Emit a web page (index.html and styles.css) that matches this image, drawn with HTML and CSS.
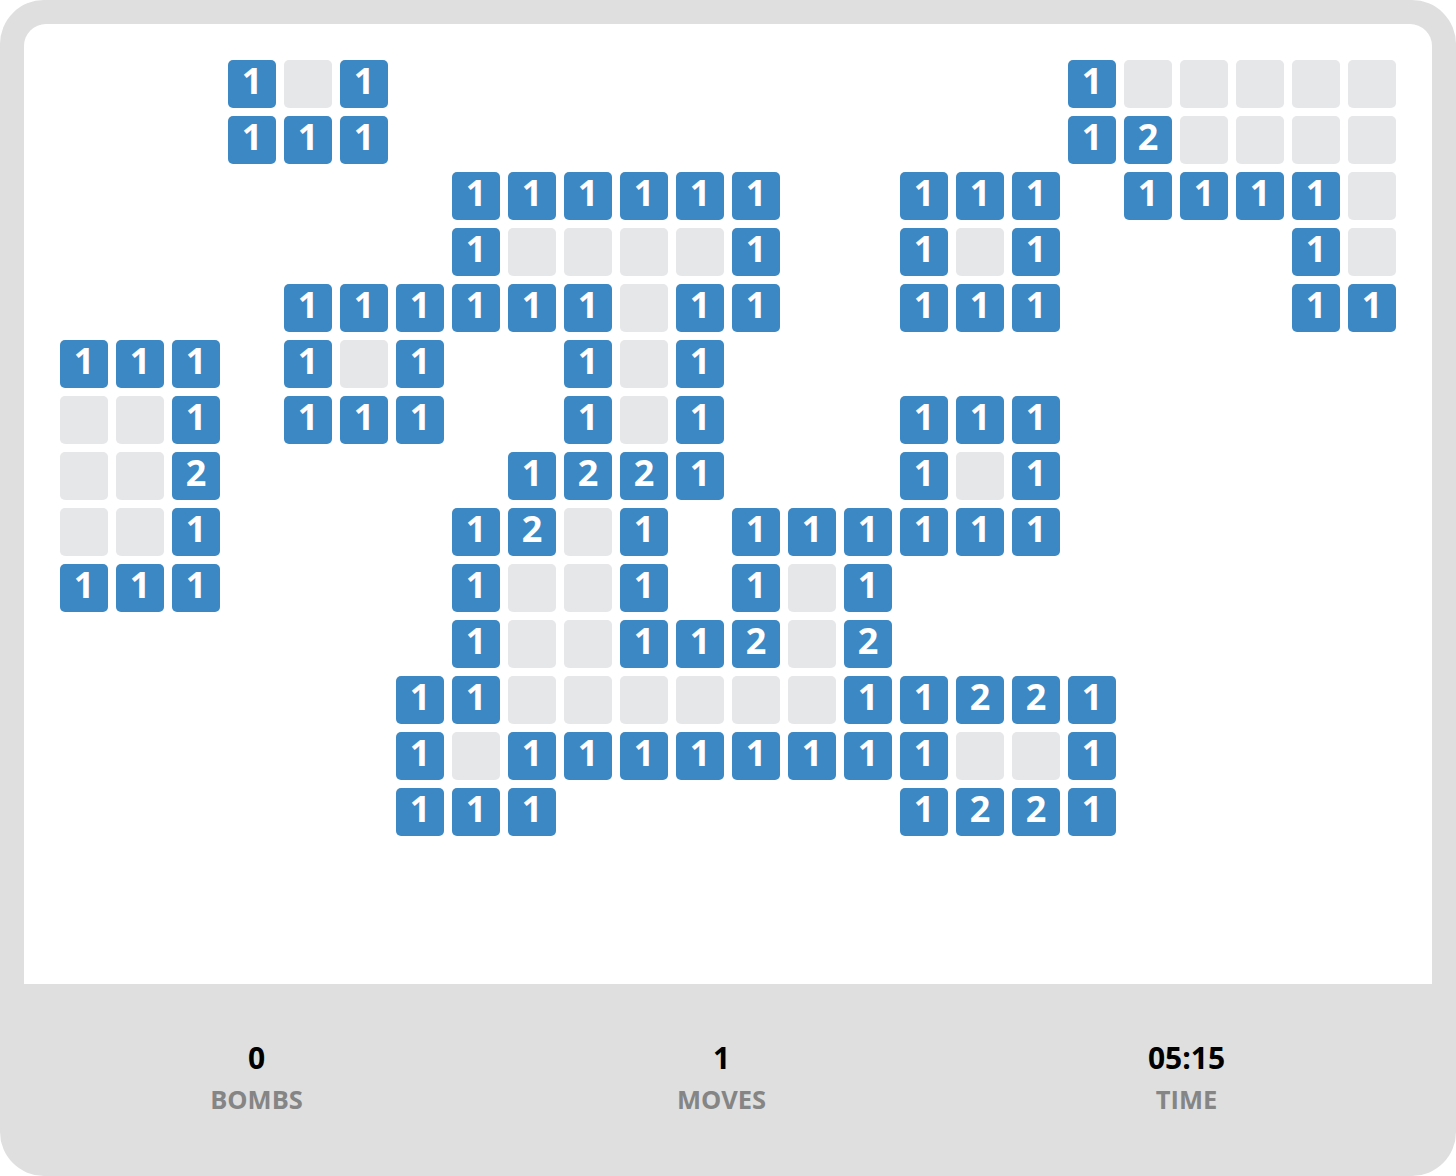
FILE: index.html
```html
<html>
<head><title>Minesweeper</title>
<link rel="stylesheet" href="styles.css">
</head>
<body>
<div class="frame">
	<div class="board" id="board"></div>
	<div class="stats">
		<div class="stat"><div class="value">0</div><div class="label">BOMBS</div></div>
		<div class="stat"><div class="value">1</div><div class="label">MOVES</div></div>
		<div class="stat"><div class="value">05:15</div><div class="label">TIME</div></div>
	</div>
</div>
<script type="text/javascript">
// '.' hidden, '0' open and empty, digits are counts
rows = [
	"...101............100000",
	"...111............120000",
	".......111111..111.11110",
	".......100001..101....10",
	"....111111011..111....11",
	"111.101..101............",
	"001.111..101...111......",
	"002.....1221...101......",
	"001....1201.111111......",
	"111....1001.101.........",
	".......10011202.........",
	"......1100000011221.....",
	"......1011111111001.....",
	"......111......1221.....",
	"........................",
	"........................"
];
board = document.getElementById("board");
for (r = 0; r < rows.length; r++) {
	for (c = 0; c < rows[r].length; c++) {
		ch = rows[r][c];
		cell = document.createElement("div");
		if (ch == ".") {
			cell.className = "cell";
		} else if (ch == "0") {
			cell.className = "cell open";
		} else {
			cell.className = "cell num";
			cell.innerHTML = ch;
		}
		board.appendChild(cell);
	}
}
</script>
</body>
</html>
```
FILE: styles.css
```css
body {
	margin:0px;
	background-color:#fff;
	font-family: "Open Sans", "DejaVu Sans", sans-serif;
}

.frame {
	width:1456px;
	height:1176px;
	box-sizing:border-box;
	padding:24px 24px 0px 24px;
	background-color:#dfdfdf;
	border-radius:44px;
	display:flex;
	flex-direction:column;
}

.board {
	background-color:#fff;
	border-radius:22px 22px 0px 0px;
	padding:36px;
	display:grid;
	grid-template-columns:repeat(24, 48px);
	grid-template-rows:repeat(16, 48px);
	gap:8px;
}

.cell {
	width:48px;
	height:48px;
	border-radius:5px;
}

.open {
	background-color:#e6e7e9;
}

.num {
	background-color:#3b88c4;
	color:#fff;
	font-weight:700;
	font-size:36px;
	line-height:42px;
	text-align:center;
}

.stats {
	display:grid;
	grid-template-columns:repeat(3, 465px);
	padding:56px 0px 0px 0px;
}

.stat {
	text-align:center;
}

.value {
	font-size:30px;
	line-height:36px;
	font-weight:700;
	color:#000;
}

.label {
	margin-top:8px;
	font-size:25.5px;
	line-height:30px;
	font-weight:700;
	color:#858585;
}
```
